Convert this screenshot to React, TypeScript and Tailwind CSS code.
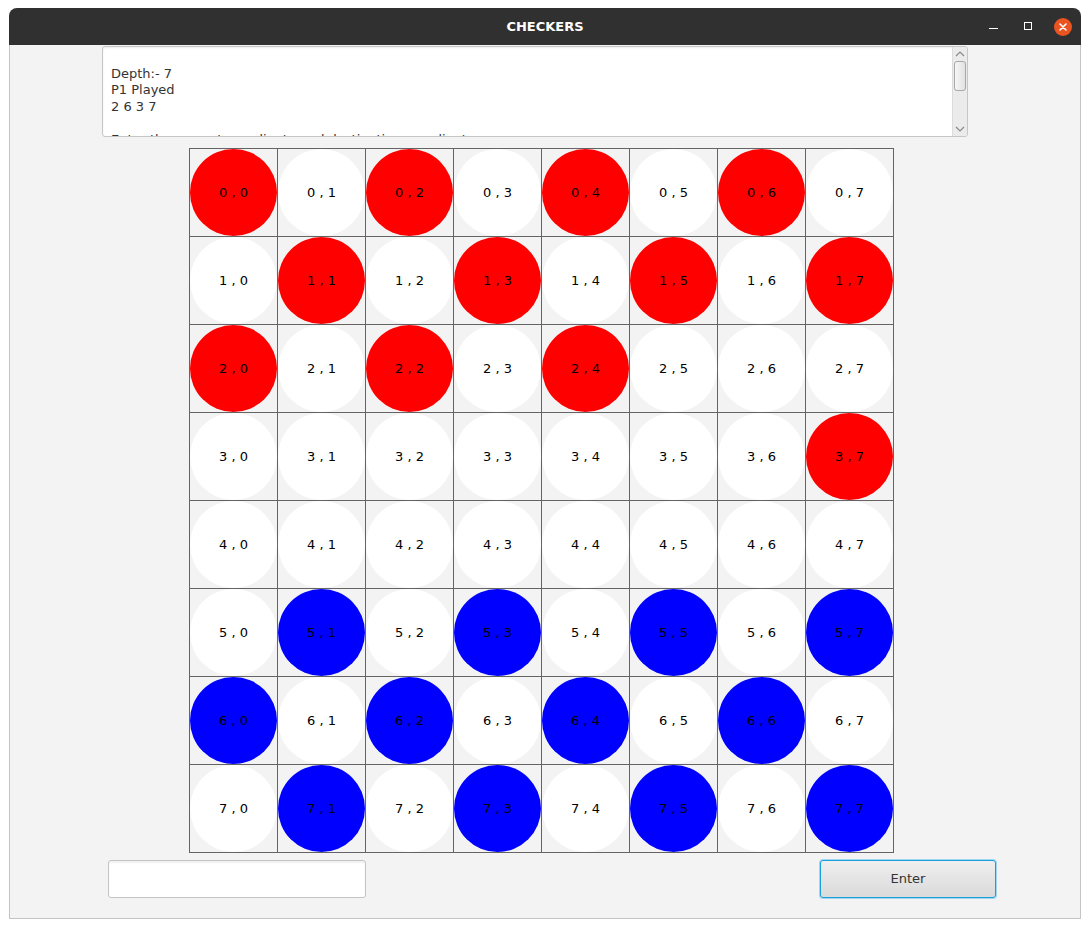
const board: string[] = [
  "R.R.R.R.",
  ".R.R.R.R",
  "R.R.R...",
  ".......R",
  "........",
  ".B.B.B.B",
  "B.B.B.B.",
  ".B.B.B.B",
];

const logLines = [
  "",
  "Depth:- 7",
  "P1 Played",
  "2 6 3 7",
  "",
  "Enter the current coordinate and destination coordinate",
];

function Cell({ row, col }: { row: number; col: number }) {
  const piece = board[row][col];
  const fill =
    piece === "R" ? "bg-[#ff0000]" : piece === "B" ? "bg-[#0000ff]" : "bg-white";
  return (
    <div className="w-[88px] h-[88px] border-r border-b border-[#646464] bg-[#f3f3f3]">
      <div
        className={`w-full h-full rounded-full flex items-center justify-center text-[13px] text-black ${fill}`}
      >
        {row} , {col}
      </div>
    </div>
  );
}

function TitleBar() {
  return (
    <div className="relative h-[37px] bg-[#303030] rounded-t-[8px] flex items-center justify-center">
      <span className="text-white font-bold text-[13px]">CHECKERS</span>
      <div className="absolute right-[9px] top-0 h-full flex items-center">
        <div className="w-[9px] h-[1px] bg-white mr-[26px] mt-[3px]" />
        <div className="w-[8px] h-[8px] border border-white mr-[22px] -mt-[1px]" />
        <div className="w-[18px] h-[18px] rounded-full bg-[#e95420] flex items-center justify-center">
          <svg width="10" height="10" viewBox="0 0 10 10">
            <path d="M2 2 L8 8 M8 2 L2 8" stroke="white" strokeWidth="1.6" strokeLinecap="round" />
          </svg>
        </div>
      </div>
    </div>
  );
}

function LogArea() {
  return (
    <div className="ml-[92px] mt-[1px] w-[866px] h-[91px] bg-white border border-[#c6c6c6] rounded-[3px] flex overflow-hidden shadow-[inset_0_1px_2px_rgba(0,0,0,0.08)]">
      <div className="flex-1 pl-[8px] pt-[2px] text-[13px] leading-[16.5px] text-[#333] overflow-hidden">
        {logLines.map((line, i) => (
          <div key={i} className="h-[16.5px] whitespace-nowrap">
            {line}
          </div>
        ))}
      </div>
      <div className="w-[15px] h-full bg-[#ebebeb] border-l border-[#dcdcdc] flex flex-col items-center">
        <svg width="10" height="6" viewBox="0 0 10 6" className="mt-[4px]">
          <path d="M1 5 L5 1 L9 5" stroke="#8a8a8a" strokeWidth="1.2" fill="none" />
        </svg>
        <div className="mt-[4px] w-[12px] h-[30px] rounded-[3px] border border-[#a8a8a8] bg-gradient-to-r from-[#f6f6f6] to-[#e2e2e2]" />
        <div className="flex-1" />
        <svg width="10" height="6" viewBox="0 0 10 6" className="mb-[4px]">
          <path d="M1 1 L5 5 L9 1" stroke="#8a8a8a" strokeWidth="1.2" fill="none" />
        </svg>
      </div>
    </div>
  );
}

export default function App() {
  return (
    <div
      className="w-[1090px] h-[928px] bg-white pt-[8px] pl-[9px]"
      style={{ fontFamily: '"DejaVu Sans", "Noto Sans", sans-serif' }}
    >
      <div className="w-[1072px] h-[911px] flex flex-col">
        <TitleBar />
        <div className="flex-1 bg-[#f3f3f3] border-x border-b border-[#c4c4c4]">
          <LogArea />

          <div className="ml-[179px] mt-[11px] w-[705px] border-l border-t border-[#646464] grid grid-cols-8">
            {board.map((r, ri) =>
              r.split("").map((_, ci) => <Cell key={`${ri}-${ci}`} row={ri} col={ci} />)
            )}
          </div>

          <div className="flex mt-[7px]">
            <input
              className="ml-[98px] w-[258px] h-[38px] bg-white border border-[#c4c4c4] rounded-[3px] outline-none shadow-[inset_0_2px_2px_rgba(0,0,0,0.06)] px-2 text-[13px]"
              type="text"
            />
            <button className="ml-[454px] w-[176px] h-[38px] rounded-[3px] border border-[#1a9fdc] ring-1 ring-[#9dd6f0] bg-gradient-to-b from-[#efefef] to-[#dadada] text-[13px] text-[#333]">
              Enter
            </button>
          </div>
        </div>
      </div>
    </div>
  );
}
